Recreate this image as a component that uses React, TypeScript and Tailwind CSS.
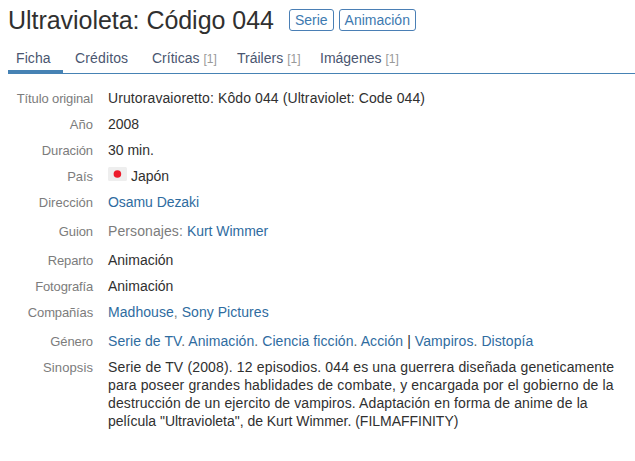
import type { ReactNode } from 'react'

const tabs = [
  { label: 'Ficha', active: true, className: 'w-[55px] tracking-[0.1px]' },
  { label: 'Créditos', className: 'w-[77px] tracking-[0.14px]' },
  { label: 'Críticas', count: 1, className: 'w-[85px]' },
  { label: 'Tráilers', count: 1, className: 'w-[83px]' },
  { label: 'Imágenes', count: 1, className: 'w-[95px]' },
]

function Tag({ children }: { children: ReactNode }) {
  return (
    <a className="flex h-[22px] items-center rounded-[3px] border border-[#4a7fb5] px-[5px] text-sm text-[#3d7ab0]">
      {children}
    </a>
  )
}

function Link({ children }: { children: ReactNode }) {
  return <a className="text-[#2f6c9f]">{children}</a>
}

type RowProps = {
  label: string
  labelClassName?: string
  className?: string
  children: ReactNode
}

function Row({ label, labelClassName = '', className = 'h-[26px]', children }: RowProps) {
  return (
    <div className={`flex text-sm leading-[18px] ${className}`}>
      <dt className={`w-[93px] shrink-0 pt-px text-right text-[13px] text-[#7c7c7c] ${labelClassName}`}>{label}</dt>
      <dd className="ml-[15px] whitespace-nowrap">{children}</dd>
    </div>
  )
}

function JapanFlag() {
  return (
    <svg className="mr-1 -mt-[6px] inline-block h-[14px] w-[19px] align-middle" viewBox="0 0 19 14">
      <rect fill="#eee" height="14" rx="1.5" width="19" />
      <circle cx="9.4" cy="7" fill="#ed1c2c" r="3.8" />
    </svg>
  )
}

export default function App() {
  return (
    <main className="h-[461px] w-[635px] overflow-hidden bg-white font-['Liberation_Sans',Arial,sans-serif] text-[#303030]">
      <header className="flex h-[42px] items-start pl-2">
        <h1 className="mt-[5px] text-[25px] leading-[30px] tracking-[-0.04px] whitespace-nowrap">
          Ultravioleta: Código 044
        </h1>
        <div className="mt-[9px] ml-[15px] flex gap-[5px]">
          <Tag>Serie</Tag>
          <Tag>Animación</Tag>
        </div>
      </header>

      <nav className="ml-2 flex h-8 border-b border-[#4682b4] text-sm text-[#4a5670]">
        {tabs.map((tab) => (
          <a
            className={`h-8 pt-[7px] pl-2 leading-[18px] whitespace-nowrap ${tab.active ? 'mr-1 border-b-4 border-[#4682b4]' : ''} ${tab.className}`}
            key={tab.label}
          >
            {tab.label}
            {tab.count && <span className="ml-1 text-xs text-[#999]">[{tab.count}]</span>}
          </a>
        ))}
      </nav>

      <dl className="pt-[15px]">
        <Row label="Título original" labelClassName="tracking-[-0.12px]">
          <span className="tracking-[0.1px]">Urutoravaioretto: Kôdo 044 (Ultraviolet: Code 044)</span>
        </Row>
        <Row label="Año" labelClassName="tracking-[0.05px]">2008</Row>
        <Row label="Duración" labelClassName="tracking-[-0.1px]">30 min.</Row>
        <Row label="País" labelClassName="tracking-[-0.05px]">
          <JapanFlag />
          Japón
        </Row>
        <Row className="h-[29px]" label="Dirección">
          <span className="tracking-[-0.06px]">
            <Link>Osamu Dezaki</Link>
          </span>
        </Row>
        <Row className="h-[29px]" label="Guion" labelClassName="tracking-[-0.1px]">
          <span className="tracking-[0.09px] text-[#7c7c7c]">Personajes: </span>
          <span className="tracking-[-0.03px]">
            <Link>Kurt Wimmer</Link>
          </span>
        </Row>
        <Row label="Reparto" labelClassName="tracking-[-0.15px]">Animación</Row>
        <Row label="Fotografía" labelClassName="tracking-[-0.15px]">Animación</Row>
        <Row className="h-[29px]" label="Compañías" labelClassName="tracking-[-0.15px]">
          <span className="tracking-[0.05px] text-[#7c7c7c]">
            <Link>Madhouse</Link>, <Link>Sony Pictures</Link>
          </span>
        </Row>
        <Row label="Género" labelClassName="tracking-[-0.1px]">
          <span className="tracking-[0.07px] text-[#666]">
            <Link>Serie de TV</Link>. <Link>Animación</Link>. <Link>Ciencia ficción</Link>. <Link>Acción</Link>{' '}
            <span className="text-[#303030]">|</span> <Link>Vampiros</Link>. <Link>Distopía</Link>
          </span>
        </Row>
        <Row className="h-[72px]" label="Sinopsis" labelClassName="tracking-[0.1px]">
          <p>
            <span className="block tracking-[0.152px]">
              Serie de TV (2008). 12 episodios. 044 es una guerrera diseñada geneticamente
            </span>
            <span className="block tracking-[0.152px]">
              para poseer grandes hablidades de combate, y encargada por el gobierno de la
            </span>
            <span className="block tracking-[0.11px]">
              destrucción de un ejercito de vampiros. Adaptación en forma de anime de la
            </span>
            <span className="block tracking-[-0.02px]">
              película "Ultravioleta", de Kurt Wimmer. (FILMAFFINITY)
            </span>
          </p>
        </Row>
      </dl>
    </main>
  )
}
